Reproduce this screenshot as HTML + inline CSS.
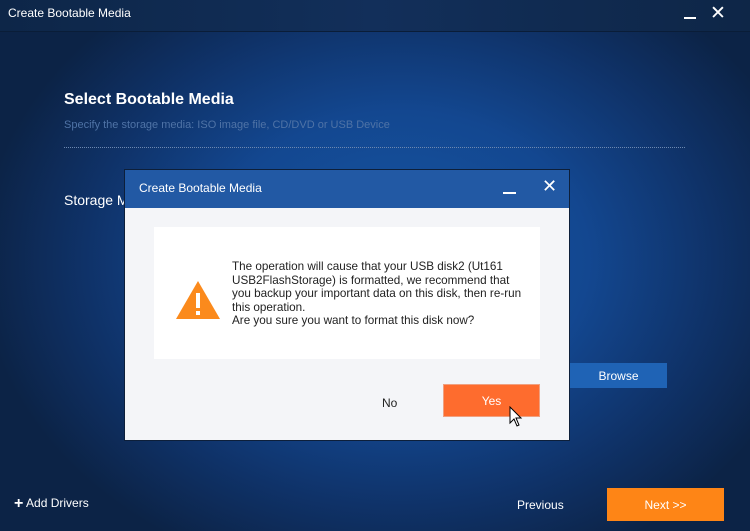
<!DOCTYPE html>
<html><head><style>
*{margin:0;padding:0;box-sizing:border-box}
body{width:750px;height:531px;overflow:hidden;font-family:"Liberation Sans",sans-serif;position:relative;
background:radial-gradient(ellipse 420px 330px at 400px 260px,#1556a3 0%,#134790 45%,#0f3268 75%,#0c2346 100%)}
.abs{position:absolute}
.t{color:#fff}
</style></head><body>
<div class="abs" style="left:0;top:0;width:750px;height:32px;background:linear-gradient(90deg,#0d2648,#122f5a 50%,#0e2647);border-bottom:1px solid #0a1d38"></div>
<div class="abs t" style="left:8px;top:6px;font-size:12px">Create Bootable Media</div>
<div class="abs" style="left:684px;top:17px;width:12px;height:2px;background:#fff"></div>
<div class="abs t" style="left:710px;top:2px;font-size:19px">✕</div>
<div class="abs t" style="left:64px;top:91px;font-size:16px;font-weight:bold">Select Bootable Media</div>
<div class="abs" style="left:64px;top:119px;font-size:11px;color:#4f73a6">Specify the storage media: ISO image file, CD/DVD or USB Device</div>
<div class="abs" style="left:64px;top:147px;width:621px;border-top:1px dotted #6d88b0"></div>
<div class="abs t" style="left:64px;top:192px;font-size:14px">Storage M</div>
<div class="abs t" style="left:570px;top:363px;width:97px;height:25px;background:#1f63b5;font-size:12px;text-align:center;line-height:27px">Browse</div>
<div class="abs t" style="left:14px;top:495px;font-size:12px"><b style="font-size:16px;vertical-align:-1px">+</b> Add Drivers</div>
<div class="abs t" style="left:517px;top:498px;font-size:12px">Previous</div>
<div class="abs t" style="left:607px;top:488px;width:117px;height:33px;background:#fe8516;font-size:12px;text-align:center;line-height:35px">Next &gt;&gt;</div>

<div class="abs" style="left:124px;top:169px;width:446px;height:272px;background:#f4f5f8;border:1px solid #0d1f3a">
 <div style="height:38px;background:#2259a4;position:relative">
  <div class="abs t" style="left:14px;top:11px;font-size:12px">Create Bootable Media</div>
  <div class="abs" style="left:378px;top:22px;width:13px;height:2px;background:#fff"></div>
  <div class="abs t" style="left:417px;top:6px;font-size:18px">✕</div>
 </div>
 <div class="abs" style="left:29px;top:57px;width:386px;height:132px;background:#fff"></div>
 <svg class="abs" style="left:50px;top:110px" width="46" height="40" viewBox="0 0 46 40"><polygon points="23,1 45,39 1,39" fill="#fb8a1c"/><rect x="21" y="13" width="4" height="15" fill="#fff"/><rect x="21" y="31" width="4" height="4" fill="#fff"/></svg>
 <div class="abs" style="left:107px;top:90px;width:292px;font-size:11.7px;line-height:13.5px;color:#222">The operation will cause that your USB disk2 (Ut161 USB2FlashStorage) is formatted, we recommend that you backup your important data on this disk, then re-run this operation.<br>Are you sure you want to format this disk now?</div>
 <div class="abs" style="left:257px;top:226px;font-size:12px;color:#222">No</div>
 <div class="abs t" style="left:318px;top:214px;width:97px;height:33px;background:#fe6c2e;border:1px solid #f0a080;font-size:12px;text-align:center;line-height:33px">Yes</div>
 <svg class="abs" style="left:384px;top:236px" width="14" height="22" viewBox="0 0 14 22"><path d="M1 1 L1 17 L5 13 L8 20 L10 19 L7 12 L12 12 Z" fill="#fff" stroke="#000" stroke-width="1"/></svg>
</div>
</body></html>
